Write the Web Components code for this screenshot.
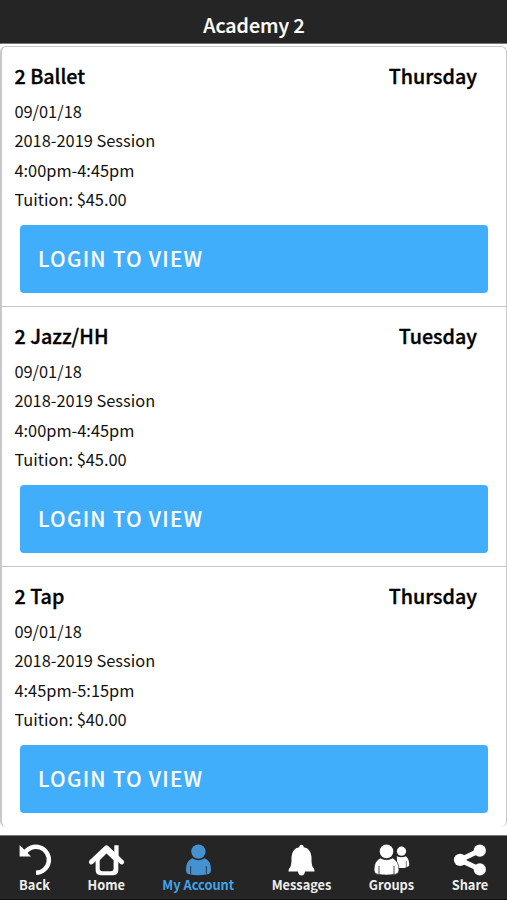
<!DOCTYPE html>
<html lang="en">
<head>
<meta charset="utf-8">
<title>Academy 2</title>
<style>
html,body{margin:0;height:100%;background:#fff}
body{font-family:"Noto Sans CJK SC","Noto Sans",sans-serif;color:#111;overflow:hidden}
</style>
</head>
<body>
<academy-app></academy-app>
<script>
const define = (name, html, setup) => {
  const t = document.createElement('template');
  t.innerHTML = html;
  customElements.define(name, class extends HTMLElement {
    connectedCallback() {
      if (this.shadowRoot) return;
      const root = this.attachShadow({mode: 'open'});
      root.append(t.content.cloneNode(true));
      if (setup) setup(this, root);
    }
  });
};

define('title-bar', `<style>
:host{display:block;box-sizing:border-box;height:44px;padding:6px 0 0 1px;background:#252525;border-bottom:1px solid #777;color:#fff;text-align:center;font-size:19.6px;line-height:38px;font-weight:500;-webkit-text-stroke:.2px}
</style><slot></slot>`);

define('action-button', `<style>
:host{display:flex;align-items:center;box-sizing:border-box;height:68px;padding:0 18px 2px;border-radius:4px;background:#41aefc;color:#fff;font-size:20.7px;line-height:30px;font-weight:500;letter-spacing:1.25px;-webkit-text-stroke:.1px}
</style><slot></slot>`);

define('class-card', `<style>
:host{display:block;box-sizing:border-box;height:260px;padding:12px 18px 0 12px;border-bottom:1px solid #c6c6c6}
:host(:last-child){border-bottom-color:transparent}
header{display:flex;justify-content:space-between;padding:0 11px 0 .5px;height:37px;line-height:34px;font-size:19.7px;font-weight:500;color:#000;-webkit-text-stroke:.35px}
.d{line-height:29.3px;font-size:16.4px;color:#111;margin:1px 0 0 .4px}
action-button{margin:11px 0 0 6px}
</style>
<header><slot name="name"></slot><slot name="day"></slot></header>
<div class="d"><slot></slot></div>
<action-button>LOGIN TO VIEW</action-button>`);

define('class-list', `<style>
:host{display:block;box-sizing:border-box;height:781px;margin-top:2px;border:1px solid #c8c8c8;border-left-width:2px;border-bottom:0;border-radius:6px;background:#fff}
</style><slot></slot>`);

const icons = {
  Back: '<path d="M8.5 9.5A13 13 0 1 1 20 28.8" fill="none" stroke="#fff" stroke-width="4.4"/><path d="M3.6 1L15 12.6H3.6Z" fill="#fff"/>',
  Home: '<path fill-rule="evenodd" d="M18.3 3L30.3 14V26Q30.3 31.2 25.2 31.2H12.7Q7.6 31.2 7.6 26V14ZM18.5 9.5L11.7 16.2V24.5Q11.7 27.2 14.4 27.2H22.8Q25.6 27.2 25.6 24.5V16.2Z" fill="#fff"/><path d="M3.3 18L18.5 3.8L33.7 18" fill="none" stroke="#fff" stroke-width="4.8" stroke-linecap="round" stroke-linejoin="round"/><path d="M26.3 1.2h4.3v13.5l-4.3-4z" fill="#fff"/>',
  'My Account': '<circle cx="18.4" cy="7.6" r="7.2" fill="#4592d1"/><path d="M12.2 14.3Q18.4 18 24.7 14.3Q31 17 31 26Q31 30 27 30.3Q18 32 9.5 30.3Q6 30 6 26Q6 17 12.2 14.3Z" fill="#4592d1"/><path d="M10.7 22.2v7.6M26.3 22.2v7.6" stroke="#252525" stroke-width=".8"/>',
  Messages: '<path d="M16.2 3.2Q16.5.8 18.5.8T20.8 3.2Q28 4.5 28.5 13Q28.2 22 30.5 24Q31.5 25 31.5 27.5H22Q21.5 31.5 18.5 31.5T15 27.5H5.5Q5.5 25 6.5 24Q8.8 22 8.5 13Q9 4.5 16.2 3.2Z" fill="#fff"/>',
  Groups: '<circle cx="28.5" cy="7.2" r="4.6" fill="#fff"/><path d="M23.8 12.2Q28.5 14.5 33 12.2Q36.5 15 36.2 22L31.5 24H24.5Z" fill="#fff"/><path d="M33.3 17v6" stroke="#252525" stroke-width=".6"/><circle cx="13.5" cy="7.4" r="7.8" fill="#252525"/><circle cx="13.5" cy="7.4" r="6.8" fill="#fff"/><path d="M7.3 14Q13.5 17.5 19.6 14Q26 17 26 26Q26 30 22 30.4Q13.5 31.8 5 30.4Q1 30 1 26Q1 17 7.3 14Z" fill="#fff" stroke="#252525" stroke-width=".7"/><path d="M6 22v8M21 22v8" stroke="#252525" stroke-width=".8"/>',
  Share: '<path d="M27.8 6.5L8 15.9L27.8 25.3" fill="none" stroke="#fff" stroke-width="5"/><circle cx="8.1" cy="15.9" r="6.2" fill="#fff"/><circle cx="27.8" cy="6.6" r="6.1" fill="#fff"/><circle cx="27.8" cy="25.4" r="6.1" fill="#fff"/>'
};

define('nav-item', `<style>
:host{display:flex;flex-direction:column;align-items:center;color:#eee;font-size:12.8px;line-height:18px;font-weight:700;white-space:nowrap}
:host([active]){color:#43a3e5}
svg{display:block;width:37px;height:32px;overflow:visible}
</style><svg viewBox="0 0 37 32"></svg><slot></slot>`, (el, root) => {
  root.querySelector('svg').innerHTML = icons[el.textContent.trim()];
});

define('tab-bar', `<style>
:host{display:grid;grid-template-columns:69px 74.5px 109.5px 97px 83px 74px;box-sizing:border-box;height:65px;margin-top:8px;padding-top:8px;background:#252525;border-top:1px solid #777;border-bottom:1px solid #170b10}
</style>
<nav-item>Back</nav-item><nav-item>Home</nav-item><nav-item active>My Account</nav-item><nav-item>Messages</nav-item><nav-item>Groups</nav-item><nav-item>Share</nav-item>`);

const classes = [
  ['2 Ballet', 'Thursday', '4:00pm-4:45pm', '$45.00'],
  ['2 Jazz/HH', 'Tuesday', '4:00pm-4:45pm', '$45.00'],
  ['2 Tap', 'Thursday', '4:45pm-5:15pm', '$40.00']
];
define('academy-app', `<style>
:host{display:block;height:900px}
</style>
<title-bar>Academy 2</title-bar>
<class-list>${classes.map(([name, day, time, fee]) => `<class-card><span slot="name">${name}</span><span slot="day">${day}</span><div>09/01/18</div><div>2018-2019 Session</div><div>${time}</div><div>Tuition: ${fee}</div></class-card>`).join('')}</class-list>
<tab-bar></tab-bar>`);
</script>
</body>
</html>
